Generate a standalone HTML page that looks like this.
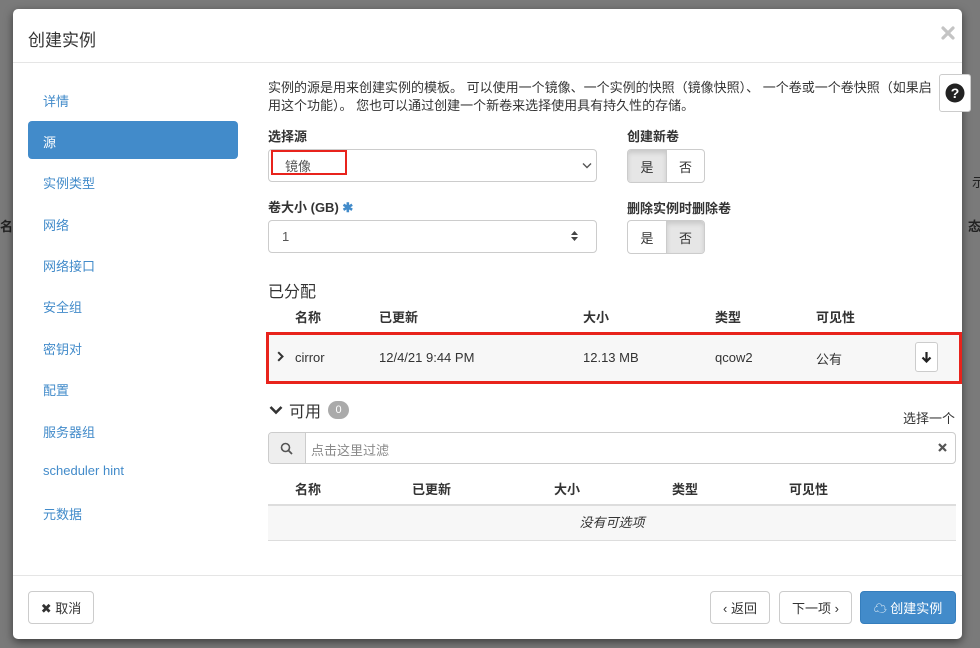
<!DOCTYPE html>
<html><head><meta charset="utf-8"><style>
*{box-sizing:border-box}
body{margin:0;width:980px;height:648px;background:#7a7a7a;font-family:"Liberation Sans","Noto Sans CJK SC",sans-serif;font-size:13px;color:#333;position:relative;overflow:hidden}
.bgtxt{position:absolute;color:#222;font-size:13px;font-weight:bold}
.modal{position:absolute;left:13px;top:9px;width:949px;height:630px;background:#fff;border-radius:5px;box-shadow:0 3px 9px rgba(0,0,0,.5)}
.hdr{position:absolute;left:0;top:0;right:0;height:54px;border-bottom:1px solid #e5e5e5}
.hdr h4{margin:0;position:absolute;left:15px;top:17px;font-size:17px;font-weight:normal;color:#333}
.a{position:absolute;white-space:nowrap}
.nav{color:#428bca;font-size:13px}
.active{position:absolute;left:15px;top:112px;width:210px;height:38px;background:#428bca;border-radius:4px;color:#fff;padding:11px 15px}
.lbl{font-weight:bold;font-size:13px}
.inp{position:absolute;border:1px solid #ccc;border-radius:4px;background:#fff}
.bg{position:absolute;display:flex;border:1px solid #ccc;border-radius:4px;overflow:hidden}
.bg span{width:38px;height:32px;display:flex;align-items:center;justify-content:center}
.bg .on{background:#e6e6e6;box-shadow:inset 0 3px 5px rgba(0,0,0,.125)}
.bg span+span{border-left:1px solid #ccc}
.btn{position:absolute;top:591px;height:33px;border:1px solid #ccc;border-radius:4px;background:#fff;display:flex;align-items:center;justify-content:center;font-size:13px}
</style></head><body>
<div class="bgtxt" style="left:0;top:216px">名称</div>
<div class="bgtxt" style="left:968px;top:216px">态</div>
<div class="bgtxt" style="left:972px;top:172px;font-weight:normal">示</div>
<div class="modal">
 <div class="hdr"><h4>创建实例</h4>
  <svg class="a" style="left:928px;top:17px" width="14" height="14" viewBox="0 0 14 14"><path d="M2 2L12 12M12 2L2 12" stroke="#c4c4c4" stroke-width="3.2" stroke-linecap="round"/></svg></div>
 <div class="a nav" style="left:30px;top:82px">详情</div>
 <div class="active">源</div>
 <div class="a nav" style="left:30px;top:164px">实例类型</div>
 <div class="a nav" style="left:30px;top:206px">网络</div>
 <div class="a nav" style="left:30px;top:247px">网络接口</div>
 <div class="a nav" style="left:30px;top:288px">安全组</div>
 <div class="a nav" style="left:30px;top:330px">密钥对</div>
 <div class="a nav" style="left:30px;top:371px">配置</div>
 <div class="a nav" style="left:30px;top:413px">服务器组</div>
 <div class="a nav" style="left:30px;top:454px">scheduler hint</div>
 <div class="a nav" style="left:30px;top:495px">元数据</div>

 <div class="a" style="left:255px;top:70px;width:675px;white-space:normal;line-height:18px;font-size:13px">实例的源是用来创建实例的模板。 可以使用一个镜像、一个实例的快照（镜像快照）、 一个卷或一个卷快照（如果启用这个功能）。 您也可以通过创建一个新卷来选择使用具有持久性的存储。</div>
 <div class="a" style="left:926px;top:65px;width:32px;height:38px;border:1px solid #ccc;border-radius:3px;background:#fff;display:flex;align-items:center;justify-content:center"><svg width="20" height="20" viewBox="0 0 20 20"><circle cx="10" cy="10" r="9.5" fill="#222"/><text x="10" y="15" text-anchor="middle" fill="#fff" font-size="14" font-weight="bold" font-family="Liberation Sans">?</text></svg></div>

 <div class="a lbl" style="left:255px;top:117px">选择源</div>
 <div class="inp" style="left:255px;top:140px;width:329px;height:33px"></div>
 <div class="a" style="left:258px;top:141px;width:76px;height:25px;border:2px solid #e8231c"></div>
 <div class="a" style="left:272px;top:147px;color:#555">镜像</div>
 <svg class="a" style="left:569px;top:153px" width="10" height="7" viewBox="0 0 10 7"><path d="M1 1.5L5 5.5L9 1.5" fill="none" stroke="#555" stroke-width="1.4"/></svg>
 <div class="a lbl" style="left:614px;top:117px">创建新卷</div>
 <div class="bg" style="left:614px;top:140px"><span class="on">是</span><span>否</span></div>

 <div class="a lbl" style="left:255px;top:188px">卷大小 (GB) <span style="color:#428bca">✱</span></div>
 <div class="inp" style="left:255px;top:211px;width:329px;height:33px"></div>
 <div class="a" style="left:269px;top:220px;color:#555">1</div>
 <svg class="a" style="left:557px;top:221px" width="9" height="12" viewBox="0 0 9 12"><path d="M1 5L4.5 1L8 5ZM1 7L4.5 11L8 7Z" fill="#444"/></svg>
 <div class="a lbl" style="left:614px;top:189px">删除实例时删除卷</div>
 <div class="bg" style="left:614px;top:211px"><span>是</span><span class="on">否</span></div>

 <div class="a" style="left:255px;top:269px;font-size:16px">已分配</div>
 <div class="a lbl" style="left:282px;top:298px">名称</div>
 <div class="a lbl" style="left:366px;top:298px">已更新</div>
 <div class="a lbl" style="left:570px;top:298px">大小</div>
 <div class="a lbl" style="left:702px;top:298px">类型</div>
 <div class="a lbl" style="left:803px;top:298px">可见性</div>
 <div class="a" style="left:253px;top:323px;width:696px;height:52px;border:3px solid #e8231c;background:#f7f7f7"></div>
 <svg class="a" style="left:264px;top:342px" width="7" height="11" viewBox="0 0 7 11"><path d="M1.2 1.2L5.5 5.5L1.2 9.8" fill="none" stroke="#333" stroke-width="2"/></svg>
 <div class="a" style="left:282px;top:341px">cirror</div>
 <div class="a" style="left:366px;top:341px">12/4/21 9:44 PM</div>
 <div class="a" style="left:570px;top:341px">12.13 MB</div>
 <div class="a" style="left:702px;top:341px">qcow2</div>
 <div class="a" style="left:803px;top:340px">公有</div>
 <div class="a" style="left:902px;top:333px;width:23px;height:30px;border:1px solid #ccc;border-radius:3px;background:#fff"></div>
 <svg class="a" style="left:908px;top:342px" width="11" height="12" viewBox="0 0 11 12"><path d="M5.5 1V10M1.5 6.5L5.5 10.5L9.5 6.5" fill="none" stroke="#222" stroke-width="2.2"/></svg>

 <svg class="a" style="left:256px;top:396px" width="14" height="10" viewBox="0 0 14 10"><path d="M1.5 2L7 7.5L12.5 2" fill="none" stroke="#333" stroke-width="2.6"/></svg>
 <div class="a" style="left:276px;top:389px;font-size:16px">可用</div>
 <div class="a" style="left:315px;top:392px;width:21px;height:18px;border-radius:9px;background:#aaa;color:#fff;font-size:11px;text-align:center;line-height:18px">0</div>
 <div class="a" style="left:890px;top:399px">选择一个</div>
 <div class="inp" style="left:255px;top:423px;width:688px;height:32px;border-color:#ccc"></div>
 <div class="a" style="left:256px;top:424px;width:37px;height:30px;background:#eee;border-right:1px solid #ccc;border-radius:3px 0 0 3px"></div>
 <svg class="a" style="left:267px;top:433px" width="13" height="13" viewBox="0 0 13 13"><circle cx="5.5" cy="5.5" r="4" fill="none" stroke="#555" stroke-width="1.6"/><line x1="8.5" y1="8.5" x2="12" y2="12" stroke="#555" stroke-width="1.8"/></svg>
 <div class="a" style="left:298px;top:431px;color:#888">点击这里过滤</div>
 <svg class="a" style="left:925px;top:434px" width="9" height="9" viewBox="0 0 9 9"><path d="M1 1L8 8M8 1L1 8" stroke="#555" stroke-width="2.2"/></svg>
 <div class="a lbl" style="left:282px;top:470px">名称</div>
 <div class="a lbl" style="left:399px;top:470px">已更新</div>
 <div class="a lbl" style="left:541px;top:470px">大小</div>
 <div class="a lbl" style="left:659px;top:470px">类型</div>
 <div class="a lbl" style="left:776px;top:470px">可见性</div>
 <div class="a" style="left:255px;top:495px;width:688px;height:37px;background:#f7f7f7;border-top:2px solid #ddd;border-bottom:1px solid #ddd;text-align:center;line-height:34px;font-style:italic">没有可选项</div>

 <div class="a" style="left:0;top:566px;width:949px;border-top:1px solid #e5e5e5"></div>
</div>
<div class="btn" style="left:28px;width:66px">✖ 取消</div>
<div class="btn" style="left:710px;width:60px">‹ 返回</div>
<div class="btn" style="left:779px;width:73px">下一项 ›</div>
<div class="btn" style="left:860px;width:96px;background:#428bca;border-color:#357ebd;color:#fff">☁ 创建实例</div>
</body></html>
